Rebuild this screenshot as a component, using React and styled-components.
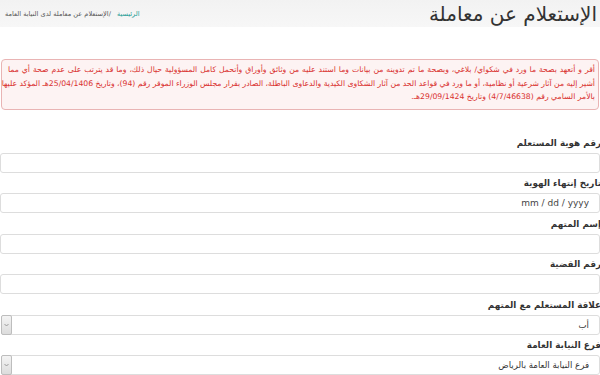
import styled, { createGlobalStyle } from 'styled-components';

const GlobalStyle = createGlobalStyle`
  html, body {
    margin: 0;
    padding: 0;
    background: #ffffff;
  }
  body {
    font-family: "DejaVu Sans", "Noto Sans", sans-serif;
    color: #333333;
    overflow: hidden;
  }
`;

const Page = styled.div`
  direction: rtl;
  width: 600px;
`;

const Header = styled.div`
  display: flex;
  justify-content: space-between;
  align-items: center;
  height: 27px;
  padding: 0 3px 0 5px;
  background: linear-gradient(#f2f2f2, #f7f7f7);
`;

const Title = styled.h1`
  margin: 0;
  font-size: 20px;
  font-weight: normal;
  color: #333333;
`;

const Breadcrumb = styled.div`
  display: flex;
  gap: 6px;
  font-size: 6.6px;
  color: #555555;
`;

const CrumbLink = styled.a`
  color: #1a9a93;
  text-decoration: none;
`;

const Alert = styled.div`
  margin: 32px 1px 0 1px;
  padding: 3px 3px 5px 6px;
  background: #fdf3f3;
  border: 1px solid #e9b4b4;
  border-radius: 4px;
  color: #d9312f;
  font-size: 7.7px;
  line-height: 13.5px;
`;

const AlertLine = styled.span`
  display: block;
  white-space: nowrap;
  text-align: ${({ $full }) => ($full ? 'justify' : 'right')};
  text-align-last: ${({ $full }) => ($full ? 'justify' : 'right')};
`;

const Form = styled.form`
  display: flex;
  flex-direction: column;
  margin-top: 27px;
`;

const Field = styled.div`
  display: flex;
  flex-direction: column;
  gap: 4px;
  margin-bottom: 4.5px;
`;

const Label = styled.label`
  font-size: 8.8px;
  font-weight: bold;
  color: #333333;
  margin-right: -1px;
  height: 12px;
  line-height: 12px;
`;

const Input = styled.input`
  box-sizing: border-box;
  height: 20px;
  width: 600px;
  margin: 0 0 0 1px;
  border: 1px solid #dddddd;
  border-radius: 3px;
  background: #ffffff;
  padding: 0 10px;
  font-family: "DejaVu Sans", sans-serif;
  font-size: 9px;
  color: #333333;
  outline: none;
  &::placeholder {
    color: #444444;
  }
`;

const SelectBox = styled.div`
  position: relative;
  box-sizing: border-box;
  height: 20px;
  margin-left: 1px;
  border: 1px solid #dddddd;
  border-radius: 3px;
  display: flex;
  align-items: center;
  padding: 0 10px;
  font-size: 8.6px;
  color: #333333;
`;

const Arrow = styled.span`
  position: absolute;
  left: -1px;
  top: -1px;
  bottom: -1px;
  width: 9px;
  background: linear-gradient(#f4f4f4, #dcdcdc);
  border: 1px solid #bdbdbd;
  border-radius: 2px;
  display: flex;
  align-items: center;
  justify-content: center;
`;

function Select({ value }) {
  return (
    <SelectBox>
      {value}
      <Arrow>
        <svg width="5" height="4" viewBox="0 0 5 4">
          <path d="M0.5 1 L2.5 3 L4.5 1" fill="none" stroke="#888" strokeWidth="0.8" />
        </svg>
      </Arrow>
    </SelectBox>
  );
}

export default function App() {
  return (
    <Page>
      <GlobalStyle />
      <Header>
        <Title>الإستعلام عن معاملة</Title>
        <Breadcrumb>
          <CrumbLink href="#">الرئيسية</CrumbLink>
          <span>/الإستعلام عن معاملة لدى النيابة العامة</span>
        </Breadcrumb>
      </Header>
      <Alert>
        <AlertLine $full>
          أقر و أتعهد بصحة ما ورد في شكواي/ بلاغي، وبصحة ما تم تدوينه من بيانات وما استند عليه من وثائق وأوراق وأتحمل كامل المسؤولية حيال ذلك، وما قد يترتب على عدم صحة أي مما
        </AlertLine>
        <AlertLine $full>
          أشير إليه من آثار شرعية أو نظامية، أو ما ورد في قواعد الحد من آثار الشكاوى الكيدية والدعاوى الباطلة، الصادر بقرار مجلس الوزراء الموقر رقم (94)، وتاريخ 25/04/1406هـ المؤكد عليها
        </AlertLine>
        <AlertLine>
          بالأمر السامي رقم (4/7/46638) وتاريخ 29/09/1424هـ.
        </AlertLine>
      </Alert>
      <Form>
        <Field>
          <Label>رقم هوية المستعلم</Label>
          <Input type="text" />
        </Field>
        <Field>
          <Label>تاريخ إنتهاء الهوية</Label>
          <Input type="text" placeholder="mm / dd / yyyy" dir="rtl" />
        </Field>
        <Field>
          <Label>إسم المتهم</Label>
          <Input type="text" />
        </Field>
        <Field>
          <Label>رقم القضية</Label>
          <Input type="text" />
        </Field>
        <Field>
          <Label>علاقة المستعلم مع المتهم</Label>
          <Select value="أب" />
        </Field>
        <Field>
          <Label>فرع النيابة العامة</Label>
          <Select value="فرع النيابة العامة بالرياض" />
        </Field>
      </Form>
    </Page>
  );
}
